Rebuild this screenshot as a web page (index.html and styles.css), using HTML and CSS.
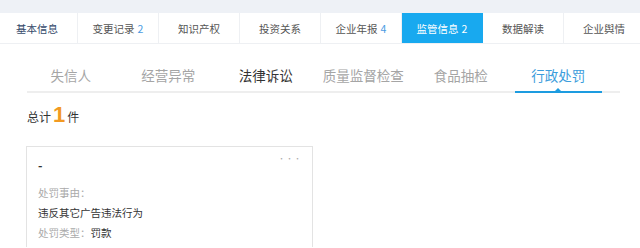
FILE: index.html
```html
<!DOCTYPE html>
<html lang="zh-CN">
<head>
    <meta charset="UTF-8">
    <title>监管信息 - 行政处罚</title>
    <link rel="stylesheet" href="styles.css">
</head>
<body>
    <div class="topbar"></div>

    <div class="tabs">
        <div class="tab tab-first">基本信息</div>
        <div class="tab">变更记录 <span class="count">2</span></div>
        <div class="tab">知识产权</div>
        <div class="tab">投资关系</div>
        <div class="tab">企业年报 <span class="count">4</span></div>
        <div class="tab active">监管信息 <span class="count">2</span></div>
        <div class="tab">数据解读</div>
        <div class="tab">企业舆情</div>
    </div>

    <div class="subnav">
        <div class="subnav-list">
            <div class="sub-item">失信人</div>
            <div class="sub-item">经营异常</div>
            <div class="sub-item has-data">法律诉讼</div>
            <div class="sub-item">质量监督检查</div>
            <div class="sub-item">食品抽检</div>
            <div class="sub-item current">行政处罚</div>
        </div>
    </div>

    <div class="total">总计<span class="total-num">1</span>件</div>

    <div class="card">
        <div class="card-more">•••</div>
        <div class="card-title">-</div>
        <div class="card-label">处罚事由：</div>
        <div class="card-value">违反其它广告违法行为</div>
        <div class="card-row"><span class="card-label">处罚类型：</span>罚款</div>
    </div>
</body>
</html>
```

FILE: styles.css
```css
* {
    margin: 0;
    padding: 0;
    box-sizing: border-box;
}

body {
    background-color: #fff;
    font-family: 'Noto Sans CJK SC', 'Liberation Sans', sans-serif;
    color: #333;
    overflow: hidden;
}

.topbar {
    height: 13px;
    background-color: #eef1f6;
}

.tabs {
    display: flex;
    height: 31px;
    margin-left: -3px;
    border-bottom: 1px solid #eef0f3;
}

.tab {
    flex: 0 0 81px;
    border-right: 1px solid #eef0f3;
    display: flex;
    align-items: center;
    justify-content: center;
    font-size: 10.5px;
    color: #555;
    white-space: nowrap;
}

.tab-first {
    color: #34496a;
}

.tab .count {
    color: #4a9be2;
    margin-left: 3px;
}

.tab.active {
    background-color: #18a9ef;
    color: #fff;
    border-right-color: #18a9ef;
}

.tab.active .count {
    color: #fff;
}

.subnav {
    margin: 0 20px 0 27px;
    height: 49px;
    border-bottom: 2px solid #eeeeee;
}

.subnav-list {
    display: flex;
    height: 100%;
    margin-left: -5px;
}

.sub-item {
    position: relative;
    flex: 0 0 97.5px;
    display: flex;
    align-items: center;
    justify-content: center;
    padding-top: 14px;
    font-size: 13.5px;
    color: #a5a5a5;
}

.sub-item.has-data {
    color: #333;
}

.sub-item.current {
    color: #3d9ddc;
}

.sub-item.current::after {
    content: '';
    position: absolute;
    left: 5px;
    right: 5px;
    bottom: -2px;
    height: 2px;
    background-color: #1d9ce0;
}

.sub-item.current::before {
    content: '';
    position: absolute;
    left: 50%;
    bottom: 0;
    margin-left: -3px;
    border: 3px solid transparent;
    border-bottom-color: #1d9ce0;
}

.total {
    margin: 9px 0 0 27px;
    height: 32px;
    font-size: 12px;
    color: #333;
}

.total-num {
    font-size: 22px;
    font-weight: bold;
    color: #f29a22;
    margin: 0 2px;
    font-family: 'Liberation Sans', sans-serif;
}

.card {
    position: relative;
    margin: 12px 0 0 26px;
    width: 287px;
    height: 101px;
    padding: 8px 11px;
    border: 1px solid #e3e3e3;
    border-bottom: none;
    font-size: 10.5px;
}

.card-more {
    position: absolute;
    top: 6px;
    right: 10px;
    font-size: 7px;
    letter-spacing: 1px;
    color: #aaa;
}

.card-title {
    height: 20px;
    line-height: 20px;
    font-weight: bold;
    font-size: 12px;
    margin-bottom: 8px;
}

.card-label {
    color: #aaa;
}

div.card-label,
.card-value,
.card-row {
    height: 20px;
    line-height: 20px;
}

.card-value,
.card-row {
    color: #333;
}
```
